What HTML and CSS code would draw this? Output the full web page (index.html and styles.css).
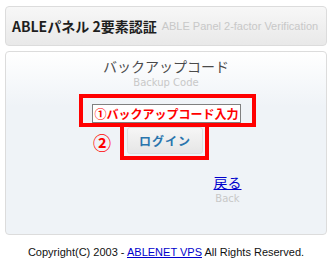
FILE: index.html
```html
<!DOCTYPE html>
<html lang="ja">
<head>
    <meta charset="UTF-8">
    <meta name="viewport" content="width=device-width, initial-scale=1.0">
    <title>ABLEパネル 2要素認証</title>
    <link rel="stylesheet" href="styles.css">
</head>
<body>
    <div class="page">
        <div class="header">
            <span class="header-title">ABLEパネル 2要素認証</span>
            <span class="header-sub">ABLE Panel 2-factor Verification</span>
        </div>

        <div class="panel">
            <div class="panel-title">バックアップコード</div>
            <div class="panel-sub">Backup Code</div>

            <div class="mark-row">
                <div class="mark mark-code">
                    <div class="code-input">①バックアップコード入力</div>
                </div>
            </div>

            <div class="mark-row">
                <div class="mark mark-login">
                    <span class="step">②</span>
                    <button class="login-btn">ログイン</button>
                </div>
            </div>

            <div class="back">
                <a href="#" class="back-link">戻る</a>
                <div class="back-sub">Back</div>
            </div>
        </div>

        <div class="footer">
            Copyright(C) 2003 - <a href="#">ABLENET VPS</a> All Rights Reserved.
        </div>
    </div>
</body>
</html>
```

FILE: styles.css
```css
body {
    margin: 0;
    font-family: "Liberation Sans", "Noto Sans CJK JP", sans-serif;
    color: #222;
}
.page {
    width: 322px;
    margin: 6px 0 0 5px;
}
.header {
    height: 38px;
    border: 1px solid #dcdcdc;
    border-radius: 4px;
    background: linear-gradient(#f7f7f7, #e9e9e9);
    display: flex;
    align-items: center;
    padding-left: 6px;
    white-space: nowrap;
    overflow: hidden;
}
.header-title {
    font-family: "Noto Sans CJK JP", sans-serif;
    font-size: 14px;
    font-weight: bold;
    color: #1e1e1e;
    margin-right: 5px;
}
.header-sub {
    font-size: 11px;
    color: #c8c8c8;
}
.panel {
    margin-top: 5px;
    height: 182px;
    border: 1px solid #dcdcdc;
    border-radius: 4px;
    background: linear-gradient(#ffffff, #eff3f7 30%);
    text-align: center;
}
.panel-title {
    font-family: "Noto Sans CJK JP", sans-serif;
    font-size: 14px;
    color: #4a4a4a;
    margin-top: 4px;
    line-height: 20px;
}
.panel-sub {
    font-family: "DejaVu Sans", sans-serif;
    font-size: 10px;
    color: #c8c8c8;
    line-height: 14px;
}
.mark-row {
    display: flex;
    justify-content: center;
}
.mark {
    border: 4px solid #ff0000;
    box-sizing: border-box;
}
.mark-code {
    margin-top: 4px;
    width: 177px;
    height: 33px;
    margin-left: 3px;
    padding: 6px 0 0 9px;
    text-align: left;
}
.code-input {
    width: 147px;
    height: 17px;
    border: 1px solid #808080;
    background: #fff;
    color: #ff0000;
    font-family: "Noto Sans CJK JP", sans-serif;
    font-weight: bold;
    font-size: 12px;
    line-height: 17px;
    text-align: center;
    white-space: nowrap;
}
.mark-login {
    position: relative;
    width: 89px;
    height: 37px;
    margin-top: -4px;
    margin-left: -3px;
    padding: 0 2px 0 3px;
}
.step {
    position: absolute;
    left: -31px;
    top: 5px;
    color: #ff0000;
    font-family: "Noto Sans CJK JP", sans-serif;
    font-weight: bold;
    font-size: 18px;
    line-height: 20px;
}
.login-btn {
    width: 76px;
    height: 27px;
    border: 1px solid #dedede;
    border-radius: 3px;
    background: linear-gradient(#f6f6f6, #e6e6e6);
    color: #2a75ad;
    font-family: "Noto Sans CJK JP", sans-serif;
    font-weight: bold;
    font-size: 12px;
    letter-spacing: 1px;
    padding: 0;
}
.back {
    width: 29px;
    margin: 14px 0 0 207px;
}
.back-link {
    display: block;
    font-family: "Noto Sans CJK JP", sans-serif;
    font-size: 14px;
    line-height: 16px;
    color: #0000cc;
}
.back-sub {
    font-family: "DejaVu Sans", sans-serif;
    font-size: 10px;
    color: #c8c8c8;
    margin-top: 3px;
}
.footer {
    text-align: center;
    font-size: 11px;
    color: #111;
    margin-top: 11px;
}
.footer a {
    color: #0000cc;
}
```
